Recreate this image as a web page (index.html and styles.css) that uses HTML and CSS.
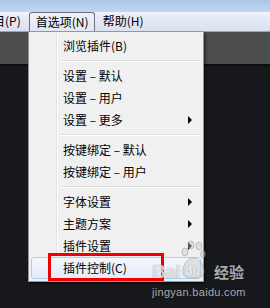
FILE: index.html
```html
<!DOCTYPE html>
<html lang="zh">
<head>
<meta charset="utf-8">
<link rel="stylesheet" href="styles.css">
</head>
<body>
<div class="screen">
  <div class="titlebar"></div>
  <div class="menubar">
    <span class="mb-item mb-first">目(P)</span>
    <span class="mb-item mb-open">首选项(N)</span>
    <span class="mb-item">帮助(H)</span>
  </div>
  <div class="toolbar"></div>
  <div class="workspace"></div>

  <div class="menu">
    <div class="mi">浏览插件(B)</div>
    <div class="sep"></div>
    <div class="mi">设置 – 默认</div>
    <div class="mi">设置 – 用户</div>
    <div class="mi"><span class="lbl">设置 – 更多</span><span class="arrow"></span></div>
    <div class="sep"></div>
    <div class="mi">按键绑定 – 默认</div>
    <div class="mi">按键绑定 – 用户</div>
    <div class="sep"></div>
    <div class="mi"><span class="lbl">字体设置</span><span class="arrow"></span></div>
    <div class="mi"><span class="lbl">主题方案</span><span class="arrow"></span></div>
    <div class="mi"><span class="lbl">插件设置</span><span class="arrow"></span></div>
    <div class="mi hot">插件控制(C)</div>
  </div>

  <div class="redbox"></div>

  <div class="watermark">
    <div class="wm-row">
      <span class="wm-bai">Bai</span>
      <span class="wm-paw">
        <svg width="26" height="42" viewBox="0 0 26 42">
          <g fill="rgba(200,200,200,0.45)" stroke="rgba(120,120,120,0.35)" stroke-width="1">
            <ellipse cx="5" cy="12" rx="3" ry="4"/>
            <ellipse cx="11" cy="5" rx="3" ry="4"/>
            <ellipse cx="19" cy="6" rx="3" ry="4"/>
            <ellipse cx="23" cy="14" rx="2.5" ry="3.5"/>
            <path d="M3 30 C4 22 9 18 13 18 C18 18 22 22 24 30 C25 36 21 38 13 38 C5 38 2 35 3 30 Z"/>
          </g>
        </svg>
        <span class="wm-du">du</span>
      </span>
      <span class="wm-jy">经验</span>
    </div>
    <div class="wm-url">jingyan.baidu.com</div>
  </div>
</div>
</body>
</html>
```
FILE: styles.css
```css
* { box-sizing: border-box; }
html, body { margin: 0; padding: 0; }
body {
  width: 270px;
  height: 308px;
  overflow: hidden;
  font-family: "Noto Sans CJK SC", "Noto Sans", sans-serif;
  font-size: 12px;
  color: #000;
}
.screen {
  position: relative;
  width: 270px;
  height: 308px;
  background: #17181b;
  display: flex;
  flex-direction: column;
}
.titlebar {
  height: 12px;
  background: linear-gradient(#a9c6e6, #c3d7ee);
}
.menubar {
  height: 20px;
  background: linear-gradient(#f1f4fb 0, #e6eaf6 6px, #dce1f1 100%);
  border-bottom: 1px solid #a0a4ad;
  display: flex;
  align-items: stretch;
  line-height: 18px;
}
.mb-item {
  padding: 0 6px;
  white-space: nowrap;
}
.mb-first {
  margin-left: -13px;
  padding-right: 8px;
}
.mb-open {
  padding: 0 7px 0 6px;
  width: 66px;
  border: 1px solid #6b717d;
  border-bottom: none;
  border-radius: 3px 3px 0 0;
  background: linear-gradient(#eef1f8, #e2e6f2);
  margin-right: 2px;
}
.toolbar {
  height: 34px;
  background: #4d4e4e;
  border-bottom: 2px solid #0c0d0e;
}
.workspace {
  flex: 1;
  background: #17181b;
}

.menu {
  position: absolute;
  left: 28px;
  top: 31px;
  width: 176px;
  height: 251px;
  padding: 3px 2px 2px 2px;
  background: #f0f0f0;
  border: 1px solid #979797;
  box-shadow: 2px 2px 2px rgba(0,0,0,0.45);
  background-image: linear-gradient(to right, transparent 27px, #e2e3e3 27px, #e2e3e3 28px, #ffffff 28px, #ffffff 29px, transparent 29px);
}
.mi {
  height: 22px;
  padding-left: 32px;
  display: flex;
  align-items: center;
  white-space: nowrap;
  line-height: 22px;
}
.lbl { flex: 1; }
.arrow {
  width: 0;
  height: 0;
  border-left: 4px solid #000;
  border-top: 4px solid transparent;
  border-bottom: 4px solid transparent;
  margin-right: 9px;
}
.sep {
  height: 8px;
  margin-left: 29px;
  margin-right: 1px;
  background: linear-gradient(transparent 3px, #e0e0e0 3px, #e0e0e0 4px, #ffffff 4px, #ffffff 5px, transparent 5px);
}
.hot {
  border: 1px solid #aecff7;
  border-radius: 3px;
  background: linear-gradient(#f2f6fc, #e3ecf9);
  padding-left: 31px;
}

.redbox {
  position: absolute;
  left: 48px;
  top: 253px;
  width: 116px;
  height: 28px;
  border: 3px solid #f20000;
}

.watermark {
  position: absolute;
  left: 152px;
  top: 238px;
  width: 100px;
  color: rgba(255,255,255,0.7);
}
.wm-row {
  display: flex;
  align-items: flex-end;
  height: 44px;
}
.wm-bai {
  font-family: "Liberation Sans", Arial, sans-serif;
  font-weight: bold;
  font-size: 19px;
  line-height: 16px;
  margin-bottom: 2px;
  letter-spacing: -0.5px;
  text-shadow: 0 0 1px rgba(110,110,110,0.7);
}
.wm-paw {
  position: relative;
  width: 26px;
  height: 42px;
}
.wm-paw svg { position: absolute; left: 0; top: 0; }
.wm-du {
  position: absolute;
  left: 5px;
  top: 25px;
  font-family: "Liberation Sans", Arial, sans-serif;
  font-weight: bold;
  font-size: 12px;
  line-height: 12px;
  color: rgba(255,255,255,0.85);
  text-shadow: 0 0 1px rgba(110,110,110,0.7);
}
.wm-jy {
  font-size: 15px;
  line-height: 16px;
  font-weight: bold;
  margin-left: 8px;
  margin-bottom: 2px;
  color: rgba(220,220,220,0.75);
}
.wm-url {
  font-family: "Liberation Sans", Arial, sans-serif;
  font-size: 11px;
  line-height: 12px;
  margin-top: 4px;
  letter-spacing: 0.3px;
  color: rgba(220,220,220,0.75);
}
```
